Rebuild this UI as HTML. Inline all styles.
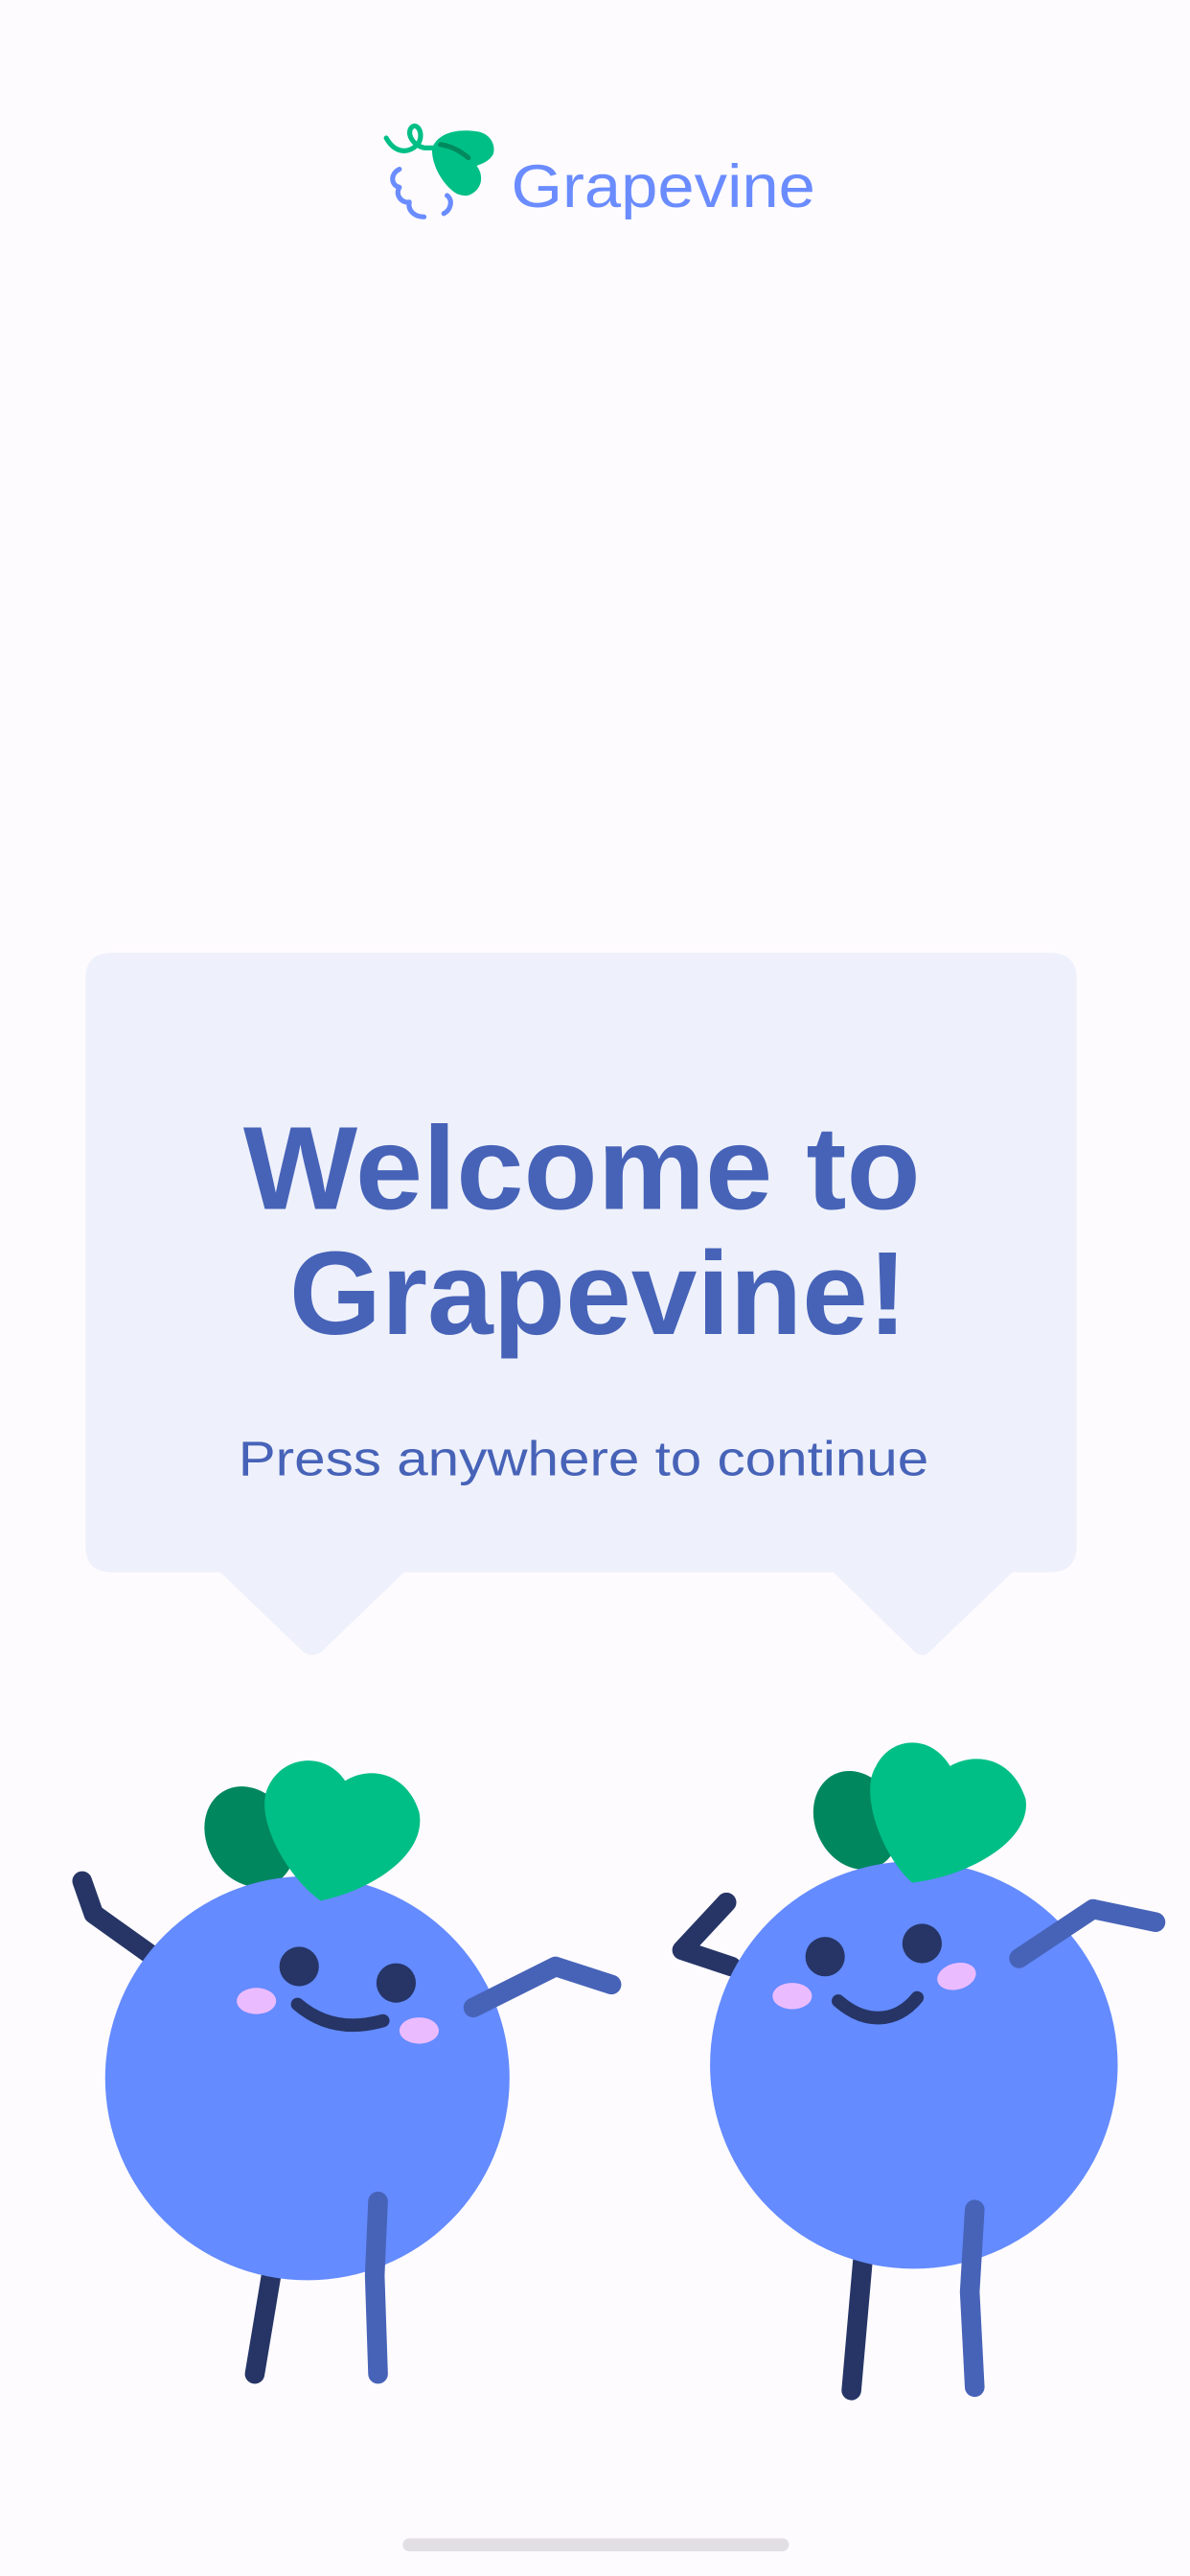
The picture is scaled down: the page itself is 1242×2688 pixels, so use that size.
<!DOCTYPE html>
<html><head><meta charset="utf-8"><style>
html,body{margin:0;padding:0;background:#fefbfe;}
svg{display:block;}
</style></head><body>
<svg width="1242" height="2688" viewBox="0 0 724 1568" preserveAspectRatio="none" xmlns="http://www.w3.org/2000/svg">
<rect width="724" height="1568" fill="#fefbfe"/>
<!-- logo -->
<g fill="none" stroke-linecap="round" stroke-linejoin="round">
<path d="M235,84 C240,93 248,94 254,88 C258,83 255,75 251,77 C247,80 250,88 258,90 L266,90" stroke="#00bf86" stroke-width="3"/>
<path d="M243,103 C237,106 238,113 243,114 C240,119 245,124 249,123 C248,128 252,132 258,132" stroke="#6a8cff" stroke-width="3"/>
<path d="M272,119 C276,122 274,128 270,130" stroke="#6a8cff" stroke-width="3"/>
</g>
<path d="M278,118 C268,112 262,98 263,90 C266,82 276,78 290,80 C298,81 302,88 300,94 C297,99 292,100 290,101 C294,106 294,114 287,118 C284,120 281,119 278,118 Z" fill="#00bf86"/>
<path d="M268,88 C275,89 280,92 285,96" stroke="#008a5e" stroke-width="3" stroke-linecap="round" fill="none"/>
<text x="311" y="126" font-family="Liberation Sans, sans-serif" font-size="37" fill="#6a8cff" textLength="185" lengthAdjust="spacingAndGlyphs">Grapevine</text>
<!-- card -->
<path d="M68,580 H639 Q655,580 655,596 V941 Q655,957 639,957 H616 L566,1005 Q561,1010 556,1005 L507,957 H246 L196,1005 Q190,1010 184,1005 L134,957 H68 Q52,957 52,941 V596 Q52,580 68,580 Z" fill="#eef1fb"/>
<g font-family="Liberation Sans, sans-serif" fill="#4763b8">
<text x="148" y="736" font-size="72" font-weight="bold" textLength="412" lengthAdjust="spacingAndGlyphs">Welcome to</text>
<text x="176" y="812" font-size="72" font-weight="bold" textLength="376" lengthAdjust="spacingAndGlyphs">Grapevine!</text>
<text x="145" y="898" font-size="30" textLength="420" lengthAdjust="spacingAndGlyphs">Press anywhere to continue</text>
</g>
<!-- character 1 -->
<g stroke-linecap="round" stroke-linejoin="round" fill="none">
<path d="M165,1385 L155,1445" stroke="#263566" stroke-width="12"/>
<path d="M92,1190 L57,1165 L50,1145" stroke="#263566" stroke-width="12"/>
</g>
<ellipse cx="152" cy="1118" rx="26" ry="32" transform="rotate(-30 152 1118)" fill="#00875e"/>
<circle cx="187" cy="1265" r="123" fill="#648bff"/>
<path d="M195,1157 C172,1140 155,1105 163,1088 C172,1068 198,1066 210,1084 C226,1074 248,1080 255,1103 C260,1128 228,1150 195,1157 Z" fill="#00bf86"/>
<g stroke-linecap="round" stroke-linejoin="round" fill="none">
<path d="M288,1222 L338,1197 L372,1208" stroke="#4763b8" stroke-width="12"/>
<path d="M230,1340 L228,1385 L230,1445" stroke="#4763b8" stroke-width="12"/>
<path d="M181,1220 C195,1232 212,1236 233,1230" stroke="#263566" stroke-width="8"/>
</g>
<ellipse cx="182" cy="1197" rx="12" ry="12" fill="#263566"/>
<ellipse cx="241" cy="1207" rx="12" ry="12" fill="#263566"/>
<ellipse cx="156" cy="1218" rx="12" ry="8" fill="#ebbbff"/>
<ellipse cx="255" cy="1236" rx="12" ry="8" fill="#ebbbff"/>
<!-- character 2 -->
<g stroke-linecap="round" stroke-linejoin="round" fill="none">
<path d="M525,1375 L518,1455" stroke="#263566" stroke-width="12"/>
<path d="M445,1197 L415,1187 L442,1158" stroke="#263566" stroke-width="12"/>
</g>
<ellipse cx="521" cy="1108" rx="25" ry="31" transform="rotate(-25 521 1108)" fill="#00875e"/>
<circle cx="556" cy="1257" r="124" fill="#648bff"/>
<path d="M555,1146 C535,1128 523,1090 533,1075 C542,1057 566,1055 578,1075 C594,1066 616,1070 624,1095 C628,1120 590,1142 555,1146 Z" fill="#00bf86"/>
<g stroke-linecap="round" stroke-linejoin="round" fill="none">
<path d="M620,1192 L665,1162 L703,1170" stroke="#4763b8" stroke-width="12"/>
<path d="M593,1345 L590,1395 L593,1453" stroke="#4763b8" stroke-width="12"/>
<path d="M510,1218 C526,1232 545,1232 558,1216" stroke="#263566" stroke-width="8"/>
</g>
<ellipse cx="502" cy="1191" rx="12" ry="12" fill="#263566"/>
<ellipse cx="561" cy="1183" rx="12" ry="12" fill="#263566"/>
<ellipse cx="482" cy="1215" rx="12" ry="8" fill="#ebbbff"/>
<ellipse cx="582" cy="1203" rx="12" ry="8" transform="rotate(-15 582 1203)" fill="#ebbbff"/>
<!-- home indicator -->
<rect x="245" y="1545" width="235" height="8" rx="4" fill="#e2dfe4"/>
</svg>
</body></html>
